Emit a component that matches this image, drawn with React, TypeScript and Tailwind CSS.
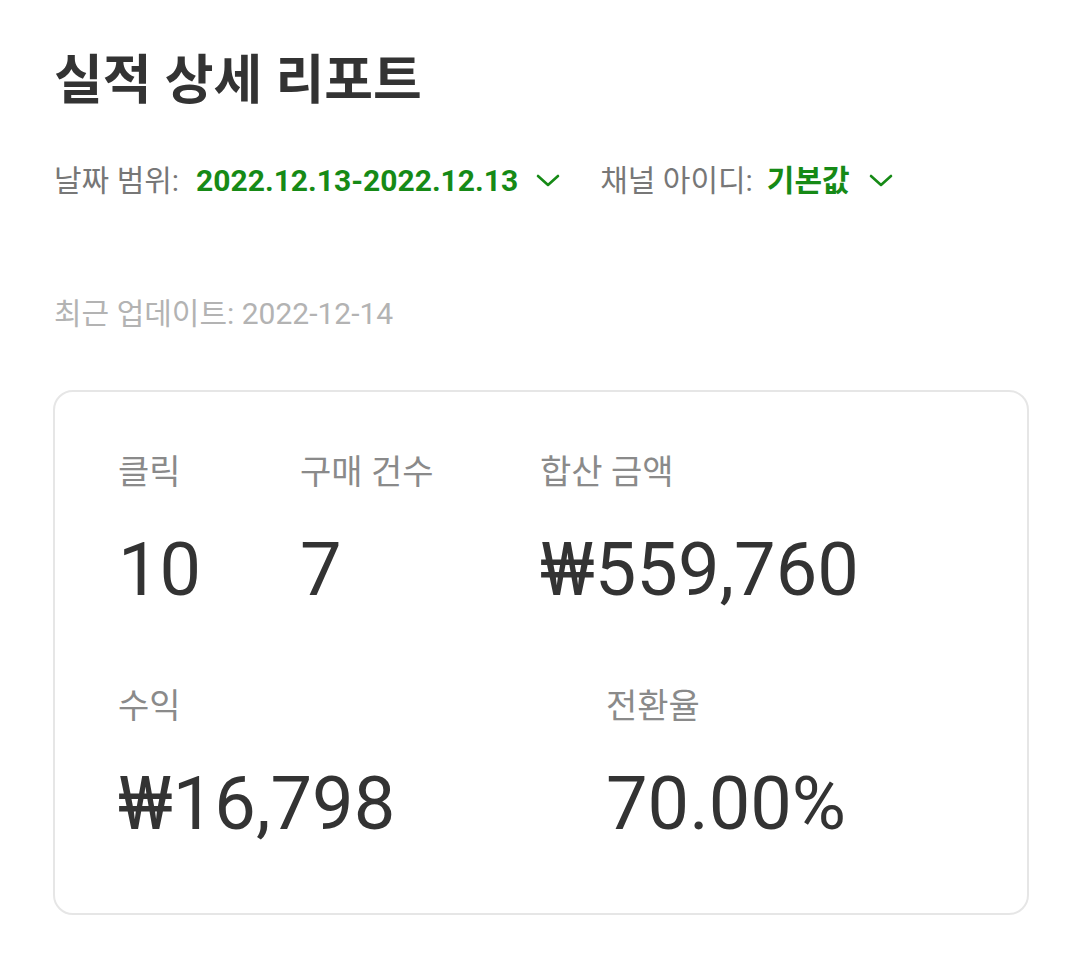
import React from 'react';

const ChevronDown: React.FC = () => (
  <svg width="26" height="16" viewBox="0 0 26 16" fill="none" className="text-[#168a16]">
    <path d="M3 4l10 9 10-9" stroke="currentColor" strokeWidth="2.6" strokeLinecap="round" strokeLinejoin="round" />
  </svg>
);

const Stat: React.FC<{ label: string; value: string; width: string }> = ({ label, value, width }) => (
  <div className={`flex flex-col ${width}`}>
    <span className="text-[34px] leading-none text-[#8a8a8a]">{label}</span>
    <span className="mt-[44px] text-[74px] leading-none text-[#333333]">{value}</span>
  </div>
);

const App: React.FC = () => {
  return (
    <div
      className="min-h-screen bg-white pl-[54px] pt-[55px]"
      style={{ fontFamily: 'Roboto, "Noto Sans CJK KR", sans-serif' }}
    >
      {/* Title */}
      <h1 className="text-[53px] font-bold leading-none text-[#333333]">실적 상세 리포트</h1>

      {/* Filters */}
      <div className="mt-[52px] flex h-[40px] items-center text-[30px]">
        <span className="text-[#777777]">날짜 범위:</span>
        <span className="ml-[17px] font-bold text-[#168a16]">2022.12.13-2022.12.13</span>
        <span className="ml-[17px]"><ChevronDown /></span>
        <span className="ml-[39px] text-[#777777]">채널 아이디:</span>
        <span className="ml-[14px] font-bold text-[#168a16]">기본값</span>
        <span className="ml-[18px]"><ChevronDown /></span>
      </div>

      {/* Last update */}
      <div className="mt-[99px] h-[30px] text-[30px] leading-none text-[#b3b3b3]">최근 업데이트: 2022-12-14</div>

      {/* Summary card */}
      <div className="ml-[-1px] mt-[61px] w-[976px] rounded-[20px] border-2 border-[#e6e6e6] px-[63px] pb-[72px] pt-[63px]">
        <div className="flex">
          <Stat label="클릭" value="10" width="w-[182px]" />
          <Stat label="구매 건수" value="7" width="w-[240px]" />
          <Stat label="합산 금액" value="₩559,760" width="w-[300px]" />
        </div>
        <div className="mt-[82px] flex">
          <Stat label="수익" value="₩16,798" width="w-[488px]" />
          <Stat label="전환율" value="70.00%" width="w-[300px]" />
        </div>
      </div>
    </div>
  );
};

export default App;
